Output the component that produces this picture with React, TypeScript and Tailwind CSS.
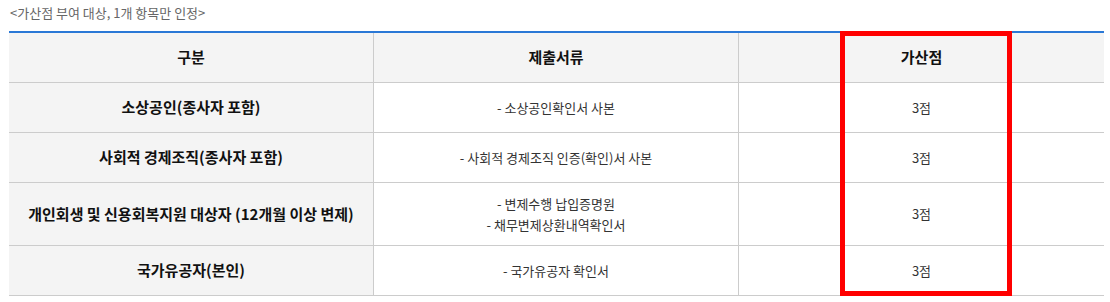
const rows = [
  { name: '소상공인(종사자 포함)', docs: ['- 소상공인확인서 사본'], point: '3점', h: 'h-[50px]' },
  { name: '사회적 경제조직(종사자 포함)', docs: ['- 사회적 경제조직 인증(확인)서 사본'], point: '3점', h: 'h-[50px]' },
  {
    name: '개인회생 및 신용회복지원 대상자 (12개월 이상 변제)',
    docs: ['- 변제수행 납입증명원', '- 채무변제상환내역확인서'],
    point: '3점',
    h: 'h-[63px]',
  },
  { name: '국가유공자(본인)', docs: ['- 국가유공자 확인서'], point: '3점', h: 'h-[50px]' },
]

export default function App() {
  return (
    <div
      className="w-[1110px] h-[302px] bg-white pl-[9px] text-[#222]"
      style={{ fontFamily: '"Noto Sans CJK KR", "Noto Sans", sans-serif' }}
    >
      <div className="h-[31px] pl-[1px] pt-[3px] text-[13px] leading-[20px] text-[#666]">
        &lt;가산점 부여 대상, 1개 항목만 인정&gt;
      </div>

      <div className="relative w-[1095px] border-t-2 border-[#2a78d6]">
        {/* header */}
        <div className="grid h-[50px] grid-cols-3 border-b border-[#cccccc] bg-[#f4f4f4] text-[15px] font-bold text-[#111]">
          <div className="flex items-center justify-center border-r border-[#cccccc]">구분</div>
          <div className="flex items-center justify-center border-r border-[#cccccc]">제출서류</div>
          <div className="flex items-center justify-center">가산점</div>
        </div>

        {rows.map((row, idx) => (
          <div key={idx} className={`grid grid-cols-3 border-b border-[#cccccc] ${row.h}`}>
            <div className="flex items-center justify-center border-r border-[#cccccc] bg-[#f4f4f4] text-[15px] font-bold text-[#111]">
              {row.name}
            </div>
            <div className="flex flex-col items-center justify-center border-r border-[#cccccc] text-[13px] leading-[21px] text-[#333]">
              {row.docs.map((d) => (
                <span key={d}>{d}</span>
              ))}
            </div>
            <div className="flex items-center justify-center text-[13px] text-[#333]">
              {row.point}
            </div>
          </div>
        ))}

        {/* highlight annotation */}
        <div className="pointer-events-none absolute -top-[2px] left-[831px] h-[265px] w-[172px] border-[5px] border-[#ff0000]" />
      </div>
    </div>
  )
}
